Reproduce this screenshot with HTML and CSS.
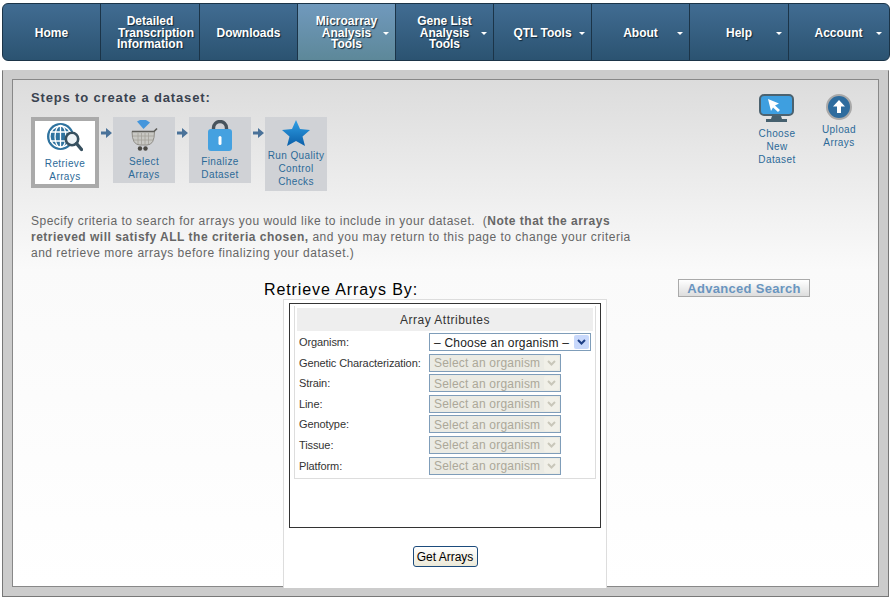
FILE: index.html
```html
<!DOCTYPE html>
<html lang="en">
<head>
  <meta charset="UTF-8">
  <title>Create Dataset</title>
  <link rel="stylesheet" href="styles.css">
</head>
<body>

<nav class="topnav">
  <a class="nav-item">Home</a>
  <a class="nav-item"><span>Detailed<br><span class="nudge">Transcription</span><br>Information</span></a>
  <a class="nav-item">Downloads</a>
  <a class="nav-item has-menu active">Microarray<br>Analysis<br>Tools</a>
  <a class="nav-item has-menu">Gene List<br>Analysis<br>Tools</a>
  <a class="nav-item has-menu">QTL Tools</a>
  <a class="nav-item has-menu">About</a>
  <a class="nav-item has-menu">Help</a>
  <a class="nav-item has-menu">Account</a>
</nav>

<main class="outer">
  <div class="panel">

    <div class="top-row">
      <div class="steps-block">
        <h2 class="steps-title">Steps to create a dataset:</h2>
        <div class="steps">
          <div class="step current">
            <svg width="36" height="29" viewBox="0 0 36 29">
              <circle cx="13.500" cy="13.500" r="13.500" fill="#2f739f"/>
              <g fill="none" stroke="#fff" stroke-width="1.300">
                <circle cx="13.500" cy="13.500" r="10.500"/>
                <ellipse cx="13.500" cy="13.500" rx="5.500" ry="11"/>
                <path d="M3 9 H24 M3 18 H24 M13.500 2.500 V25"/>
              </g>
              <circle cx="25" cy="16" r="6.200" fill="#eef3f6" stroke="#37505f" stroke-width="2.600"/>
              <path d="M29.500 20.500 L34.500 26.500" stroke="#37505f" stroke-width="3.400" stroke-linecap="round"/>
            </svg>
            <span>Retrieve<br>Arrays</span>
          </div>
          <svg class="arrow" width="11" height="12" viewBox="0 0 11 12"><path d="M0 4.500 H5 V1 L11 6 L5 11 V7.500 H0 Z" fill="#4a7299"/></svg>
          <div class="step">
            <svg class="step-icon" width="30" height="34" viewBox="0 0 30 34">
              <path d="M8 1.500 L11 0 H17 L21 2.500 L14.500 9 Z" fill="#4596dc"/>
              <path d="M3 11.500 Q3 25 11 25 H18 Q25.500 25 25.500 11.500 Z" fill="#c8c8c4" stroke="#8e8c86"/>
              <path d="M9 13 V24 M12.500 13 V25 M16 13 V25 M19.500 13 V24 M4 16 H25 M5 20 H24" stroke="#a3a19b" stroke-width=".8"/>
              <path d="M3 11.500 H25 L28 8.500" fill="none" stroke="#5e5e5a" stroke-width="1.700"/>
              <circle cx="11" cy="28.500" r="2.200" fill="#4a4843"/>
              <circle cx="16.500" cy="28.500" r="2.200" fill="#4a4843"/>
            </svg>
            <span>Select<br>Arrays</span>
          </div>
          <svg class="arrow" width="11" height="12" viewBox="0 0 11 12"><path d="M0 4.500 H5 V1 L11 6 L5 11 V7.500 H0 Z" fill="#4a7299"/></svg>
          <div class="step">
            <svg class="step-icon" width="26" height="34" viewBox="0 0 26 34">
              <path d="M6.500 10 V8 A6.500 6.500 0 0 1 19.500 8 V10" fill="none" stroke="#47535c" stroke-width="3.400"/>
              <rect x="1" y="9" width="24" height="22" rx="3" fill="#45a1e0"/>
              <rect x="11.500" y="16" width="3" height="9" rx="1.500" fill="#fff"/>
            </svg>
            <span>Finalize<br>Dataset</span>
          </div>
          <svg class="arrow" width="11" height="12" viewBox="0 0 11 12"><path d="M0 4.500 H5 V1 L11 6 L5 11 V7.500 H0 Z" fill="#4a7299"/></svg>
          <div class="step last">
            <svg width="28" height="26" viewBox="0 0 28 26">
              <defs>
                <linearGradient id="starFill" x1="0" y1="0" x2="0" y2="1">
                  <stop offset="0" stop-color="#2fa0e6"/>
                  <stop offset="1" stop-color="#0b5fa8"/>
                </linearGradient>
              </defs>
              <path d="M14 0 L18 9 L28 10 L20.500 16.500 L23 26 L14 21 L5 26 L7.500 16.500 L0 10 L10 9 Z" fill="url(#starFill)"/>
            </svg>
            <span>Run Quality<br>Control<br>Checks</span>
          </div>
        </div>
      </div>

      <div class="shortcuts">
        <div class="shortcut">
          <svg width="36" height="29" viewBox="0 0 36 29">
            <rect x="1" y="1" width="33" height="20" rx="4" fill="#3e9fe0" stroke="#4c626f" stroke-width="2"/>
            <path d="M9 5 L20 9.500 L16 11.500 L21 16 L19 18 L14 13.500 L12 17 Z" fill="#fff"/>
            <path d="M13 22 H22 L23 25 H28 V28 H7 V25 H12 Z" fill="#46606e"/>
          </svg>
          <span>Choose<br>New<br>Dataset</span>
        </div>
        <div class="shortcut short">
          <svg width="26" height="26" viewBox="0 0 26 26">
            <circle cx="13" cy="13" r="12" fill="#2e6c9e" stroke="#a9a9a9" stroke-width="2"/>
            <path d="M13 6 L19 12.500 H15 V19 H11 V12.500 H7 Z" fill="#fff"/>
          </svg>
          <span>Upload<br>Arrays</span>
        </div>
      </div>
    </div>

    <p class="intro">
      Specify criteria to search for arrays you would like to include in your dataset.&nbsp; (<b>Note that the arrays<br>
      retrieved will satisfy ALL the criteria chosen,</b> and you may return to this page to change your criteria<br>
      and retrieve more arrays before finalizing your dataset.)
    </p>

    <div class="retrieve-row">
      <h3 class="retrieve-title">Retrieve Arrays By:</h3>
      <button class="advanced-btn">Advanced Search</button>
    </div>

    <div class="form-col">
      <div class="form-frame">
        <div class="attrs">
          <div class="attrs-head">Array Attributes</div>
          <div class="attrs-rows">
            <label>Organism:</label>
            <div class="fake-select wide"><span>&#8211; Choose an organism &#8211;</span><i class="drop"><svg width="9" height="6" viewBox="0 0 9 6"><path d="M1 1 L4.500 4.500 L8 1" fill="none" stroke="#1d3f86" stroke-width="2"/></svg></i></div>

            <label>Genetic Characterization:</label>
            <div class="fake-select off"><span>Select an organism</span><i class="drop"><svg width="9" height="6" viewBox="0 0 9 6"><path d="M1 1 L4.500 4.500 L8 1" fill="none" stroke="#c9c7ba" stroke-width="2"/></svg></i></div>

            <label>Strain:</label>
            <div class="fake-select off"><span>Select an organism</span><i class="drop"><svg width="9" height="6" viewBox="0 0 9 6"><path d="M1 1 L4.500 4.500 L8 1" fill="none" stroke="#c9c7ba" stroke-width="2"/></svg></i></div>

            <label>Line:</label>
            <div class="fake-select off"><span>Select an organism</span><i class="drop"><svg width="9" height="6" viewBox="0 0 9 6"><path d="M1 1 L4.500 4.500 L8 1" fill="none" stroke="#c9c7ba" stroke-width="2"/></svg></i></div>

            <label>Genotype:</label>
            <div class="fake-select off"><span>Select an organism</span><i class="drop"><svg width="9" height="6" viewBox="0 0 9 6"><path d="M1 1 L4.500 4.500 L8 1" fill="none" stroke="#c9c7ba" stroke-width="2"/></svg></i></div>

            <label>Tissue:</label>
            <div class="fake-select off"><span>Select an organism</span><i class="drop"><svg width="9" height="6" viewBox="0 0 9 6"><path d="M1 1 L4.500 4.500 L8 1" fill="none" stroke="#c9c7ba" stroke-width="2"/></svg></i></div>

            <label>Platform:</label>
            <div class="fake-select off"><span>Select an organism</span><i class="drop"><svg width="9" height="6" viewBox="0 0 9 6"><path d="M1 1 L4.500 4.500 L8 1" fill="none" stroke="#c9c7ba" stroke-width="2"/></svg></i></div>
          </div>
        </div>
      </div>
      <div class="form-actions">
        <button class="get-btn">Get Arrays</button>
      </div>
    </div>

  </div>
</main>

</body>
</html>
```

FILE: styles.css
```css
body {
  margin: 0;
  background: #fff;
  font-family: "Liberation Sans", Arial, sans-serif;
}

/* top menu */
.topnav {
  display: grid;
  grid-template-columns: 98px 99px 98px 98px 98px 98px 98px 99px 99px;
  height: 56px;
  margin: 3px 2px 0 2px;
  border: 1px solid #1b3448;
  border-radius: 6px;
  overflow: hidden;
  background: linear-gradient(#416c92, #2b5371);
}
.nav-item {
  position: relative;
  display: flex;
  align-items: center;
  justify-content: center;
  box-sizing: border-box;
  padding-top: 3px;
  text-align: center;
  font-size: 12px;
  font-weight: bold;
  line-height: 11.5px;
  color: #fff;
  text-shadow: 1px 1px 1px #12293b;
  border-right: 1px solid #1b3448;
}
.nav-item:last-child {
  border-right: 0;
}
.nav-item.active {
  background: linear-gradient(#7099bd, #5d8899);
}
.nudge {
  margin-left: 12px;
}
.has-menu::after {
  content: "";
  position: absolute;
  right: 6px;
  top: 28px;
  border-left: 3.5px solid transparent;
  border-right: 3.5px solid transparent;
  border-top: 3px solid #fff;
}

/* page frame */
.outer {
  height: 508px;
  margin: 9px 3px 0 2px;
  padding: 8px 9px 9px 9px;
  background: #ccc;
  border: 1px solid #777;
  border-top-color: #ccc;
}
.panel {
  height: 506px;
  border: 1px solid #888;
  background: linear-gradient(#dcdcdc, #fafafa 190px, #fff);
}

.top-row {
  display: flex;
  justify-content: space-between;
  padding: 10px 8px 0 18px;
}
.steps-title {
  margin: 0;
  font-size: 13px;
  line-height: 16px;
  letter-spacing: .85px;
  color: #3a4350;
}
.steps {
  display: flex;
  align-items: flex-start;
  margin-top: 11px;
}
.step {
  display: flex;
  flex-direction: column;
  align-items: center;
  width: 62px;
  padding: 3px 0 2px 0;
  text-align: center;
  font-size: 10px;
  line-height: 13px;
  letter-spacing: .4px;
  color: #2c6a98;
  background: #d0d2d6;
}
.step span {
  margin-top: 1px;
}
.step.last {
  padding-bottom: 3px;
}
.step.last span {
  margin-top: 3px;
}
.step.current {
  width: 60px;
  padding: 2px 0 1px 0;
  border: 4px solid #aaa;
  background: #fff;
}
.step.current span {
  margin-top: 5px;
}
.arrow {
  margin: 10px 1px 0 2px;
}

.shortcuts {
  display: flex;
  margin-top: 4px;
}
.shortcut {
  display: flex;
  flex-direction: column;
  align-items: center;
  width: 62px;
  font-size: 10px;
  line-height: 13px;
  letter-spacing: .4px;
  text-align: center;
  color: #2c6a98;
}
.shortcut span {
  margin-top: 4px;
}
.shortcut.short span {
  margin-top: 3px;
}

.intro {
  margin: 22px 0 0 18px;
  font-size: 12px;
  line-height: 16px;
  letter-spacing: .5px;
  color: #666;
}

.retrieve-row {
  display: flex;
  align-items: flex-start;
  margin-top: 18px;
  padding-left: 251px;
}
.retrieve-title {
  margin: 1px 0 0 0;
  font-size: 16px;
  font-weight: normal;
  line-height: 19px;
  letter-spacing: .9px;
  color: #000;
}
.advanced-btn {
  width: 132px;
  height: 18px;
  margin-left: 260px;
  padding: 0;
  border: 1px solid #aaa;
  background: linear-gradient(#fff, #ddd);
  font-family: inherit;
  font-size: 13px;
  font-weight: bold;
  letter-spacing: .3px;
  color: #6a95bf;
}

.form-col {
  width: 312px;
  height: 285px;
  margin: 0 0 0 270px;
  padding: 3px 5px 0 5px;
  border: 1px solid #ddd;
  border-bottom: 0;
  background: #fff;
}
.form-frame {
  height: 219px;
  padding: 2px 4px;
  border: 1px solid #333;
}
.attrs {
  height: 170px;
  padding: 2px 2px 0 2px;
  border: 1px solid #ddd;
  border-top: 0;
}
.attrs-head {
  height: 23px;
  font-size: 12px;
  line-height: 24px;
  letter-spacing: .5px;
  text-align: center;
  color: #333;
  background: #eee;
}
.attrs-rows {
  display: grid;
  grid-template-columns: 130px auto;
  grid-auto-rows: 18px;
  row-gap: 2.6px;
  align-items: center;
  justify-items: start;
  margin-top: 2px;
  padding-left: 2px;
  font-size: 11px;
  letter-spacing: -.1px;
  color: #333;
}
.fake-select {
  display: flex;
  justify-content: space-between;
  align-items: center;
  box-sizing: border-box;
  width: 132px;
  height: 18px;
  padding: 1px;
  border: 1px solid #7f9db9;
  font-size: 12px;
  letter-spacing: .2px;
  white-space: nowrap;
}
.fake-select span {
  padding: 1px 0 0 3px;
}
.fake-select.wide {
  width: 162px;
  color: #222;
  background: #fff;
}
.fake-select.off {
  color: #aca899;
  background: #ebebe4;
}
.drop {
  display: flex;
  align-items: center;
  justify-content: center;
  width: 15px;
  height: 14px;
  border-radius: 2px;
  background: #c8d8fb;
}
.off .drop {
  background: #f1f0e8;
}

.form-actions {
  display: flex;
  justify-content: center;
  margin-top: 18px;
}
.get-btn {
  width: 65px;
  height: 21px;
  padding: 0;
  border: 1px solid #1c4b7c;
  border-radius: 3px;
  background: linear-gradient(#fff, #ece9d8);
  font-family: inherit;
  font-size: 12px;
  color: #000;
}
```
